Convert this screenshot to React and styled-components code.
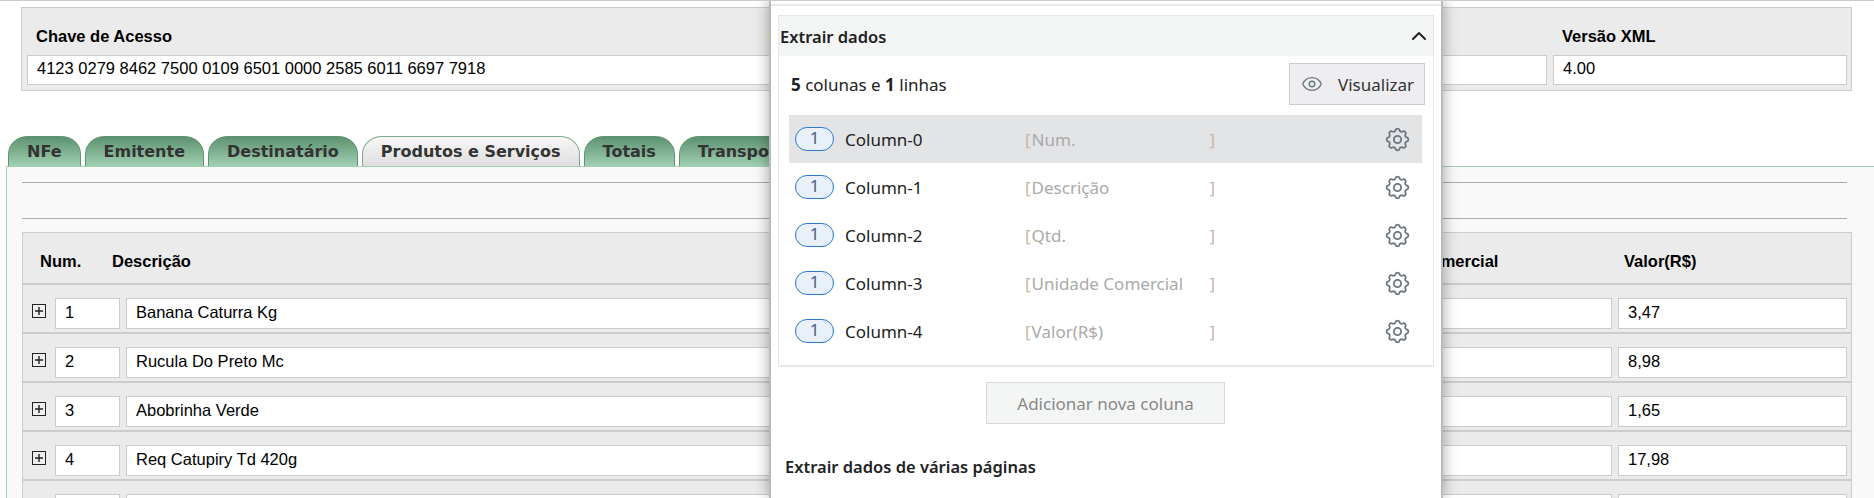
import React from 'react'
import styled, { createGlobalStyle } from 'styled-components'
import { ChevronUp, Eye } from 'lucide-react'
import { HiOutlineCog } from 'react-icons/hi'

const GlobalStyle = createGlobalStyle`
  html, body {
    margin: 0;
    padding: 0;
    background: #fff;
  }
  * {
    box-sizing: border-box;
  }
`
const Page = styled.div`
  position: relative;
  width: 1874px;
  height: 498px;
  overflow: hidden;
  border-top: 1px solid #ccc;
  font-family: "Liberation Sans", Arial, sans-serif;
  color: #000;
`
const KeyBox = styled.div`
  display: flex;
  gap: 6px;
  height: 84px;
  margin: 6px 22px 0 21px;
  padding: 0 4px 0 5px;
  background: #ebebeb;
  border: 1px solid #ccc;
`
const Field = styled.div`
  display: flex;
  flex-direction: column;
  flex: ${p => (p.$grow ? 1 : 'none')};
  width: ${p => (p.$grow ? 'auto' : '294px')};
`
const FieldLabel = styled.label`
  height: 47px;
  padding: 19px 0 0 9px;
  font-size: 16.5px;
  line-height: 19px;
  font-weight: bold;
`
const ValueBox = styled.div`
  height: 30px;
  padding-left: 9px;
  background: #fff;
  border: 1px solid #ccc;
  font-size: 16.5px;
  line-height: 25px;
  white-space: nowrap;
  overflow: hidden;
`
const Tabs = styled.div`
  display: flex;
  gap: 4px;
  height: 30px;
  margin: 45px 0 0 8px;
`
const Tab = styled.div`
  padding: 0 18px;
  border-radius: 20px 20px 0 0 / 18px 18px 0 0;
  border: 1px solid ${p => (p.$active ? '#7fa98c' : '#5f9470')};
  border-bottom: 0;
  background: ${p => (p.$active
    ? 'linear-gradient(#f7f7f7, #dedede)'
    : 'linear-gradient(#5d9270, #a0d0b2)')};
  color: #333;
  font-family: "DejaVu Sans", Verdana, sans-serif;
  font-size: 16px;
  line-height: 30px;
  font-weight: bold;
  white-space: nowrap;
`
const Panel = styled.div`
  height: 332px;
  margin-left: 6px;
  padding: 15px 22px 0 15px;
  background: #f9f9f9;
  border-top: 1px solid #a3d0b2;
  border-left: 1px solid #a3d0b2;
`
const Rule = styled.div`
  height: 1px;
  margin-bottom: ${p => p.$gap}px;
  margin-right: 5px;
  background: #aaa;
`
const Table = styled.div`
  background: #ebebeb;
  border: 1px solid #ccc;
  border-bottom: 0;
`
const GridRow = styled.div`
  display: grid;
  grid-template-columns: 26px 65px 1fr 170px 220px 229px;
  column-gap: 6px;
  align-items: start;
  padding-right: 4px;
`
const HeadRow = styled(GridRow)`
  height: 52px;
  padding-top: 19px;
  border-bottom: 2px solid #ccc;
`
const HeadCell = styled.div`
  margin-left: ${p => p.$shift || 0}px;
  font-size: 16.5px;
  line-height: 18px;
  font-weight: bold;
  white-space: nowrap;
`
const BodyRow = styled(GridRow)`
  height: 49px;
  padding-top: 13px;
  border-bottom: 2px solid #ccc;
`
const Expand = styled.svg`
  display: block;
  width: 14px;
  height: 14px;
  margin: 6px 0 0 9px;
`
const RowValue = styled(ValueBox)`
  height: 31px;
  line-height: 26px;
`
const Modal = styled.aside`
  position: absolute;
  top: -1px;
  left: 769px;
  width: 674px;
  height: 498px;
  padding: 4px 7px 0;
  background: #fff;
  border-left: 2px solid #bbb;
  border-right: 2px solid #bbb;
  box-shadow: 0 0 14px rgba(0, 0, 0, 0.35);
  font-family: "Noto Sans", "Open Sans", sans-serif;
  color: #222;
`
const TopLine = styled.div`
  height: 2px;
  margin: 0 -7px 9px;
  background: #ebebeb;
`
const Section = styled.section`
  width: 656px;
  height: 352px;
  background: #fff;
  border: 1px solid #e8e8e8;
  border-bottom-width: 2px;
`
const SectionHead = styled.div`
  display: flex;
  align-items: center;
  justify-content: space-between;
  height: 40px;
  padding: 0 2px 0 1px;
  background: #f4f6f5;
  font-size: 16.5px;
  font-weight: 600;
`
const SectionBody = styled.div`
  padding: 0 11px 0 10px;
`
const Summary = styled.div`
  display: flex;
  align-items: center;
  justify-content: space-between;
  height: 59px;
  padding: 0 0 2px 2px;
  font-size: 17px;
  b {
    font-weight: 700;
  }
`
const PreviewButton = styled.button`
  display: flex;
  align-items: center;
  gap: 15px;
  width: 136px;
  height: 42px;
  margin: -1px -3px 0 0;
  padding: 0 0 0 11px;
  background: #eeeef0;
  border: 1px solid #ccc;
  color: #333;
  font-family: inherit;
  font-size: 17px;
  svg {
    color: #6b7780;
  }
`
const ColumnRow = styled.div`
  display: flex;
  align-items: center;
  height: 48px;
  padding: 0 10px 0 6px;
  background: ${p => (p.$selected ? '#e3e4e6' : 'transparent')};
  font-size: 17px;
`
const Pill = styled.span`
  width: 39px;
  height: 24px;
  margin-right: 11px;
  background: #e8f0fa;
  border: 1.5px solid #2a7ad0;
  border-radius: 12px;
  color: #4f6280;
  font-size: 17px;
  line-height: 19px;
  text-align: center;
`
const ColumnName = styled.span`
  width: 180px;
`
const ColumnField = styled.span`
  display: flex;
  justify-content: space-between;
  width: 191px;
  margin-right: auto;
  color: #aaa;
  i {
    font-style: normal;
    color: #c9b6a6;
    margin-right: 1px;
  }
`
const Gear = styled(HiOutlineCog)`
  color: #6b7780;
  stroke-width: 1.5;
`
const AddButton = styled.button`
  display: block;
  width: 239px;
  height: 42px;
  margin: 15px 0 0 208px;
  background: #f4f6f5;
  border: 1px solid #d8d8d8;
  color: #888;
  font-family: inherit;
  font-size: 17px;
`
const SubTitle = styled.div`
  margin: 32px 0 0 7px;
  font-size: 16.5px;
  line-height: 22px;
  font-weight: 600;
`

const tabs = [
  { label: 'NFe' },
  { label: 'Emitente' },
  { label: 'Destinatário' },
  { label: 'Produtos e Serviços', active: true },
  { label: 'Totais' },
  { label: 'Transporte' },
]

const products = [
  { num: '1', desc: 'Banana Caturra Kg', value: '3,47' },
  { num: '2', desc: 'Rucula Do Preto Mc', value: '8,98' },
  { num: '3', desc: 'Abobrinha Verde', value: '1,65' },
  { num: '4', desc: 'Req Catupiry Td 420g', value: '17,98' },
  { num: '', desc: '', value: '' },
]

const columns = [
  { name: 'Column-0', field: 'Num.' },
  { name: 'Column-1', field: 'Descrição' },
  { name: 'Column-2', field: 'Qtd.' },
  { name: 'Column-3', field: 'Unidade Comercial' },
  { name: 'Column-4', field: 'Valor(R$)' },
]

const ExpandIco = () => (
  <Expand viewBox="0 0 14 14">
    <rect x="0.5" y="0.5" width="13" height="13" fill="#eee" stroke="#222" />
    <path d="M7 3v8M3 7h8" stroke="#222" strokeWidth="1.4" />
  </Expand>
)

const App = () => {
  return (
    <>
      <GlobalStyle />
      <Page>
        <KeyBox>
          <Field $grow>
            <FieldLabel>Chave de Acesso</FieldLabel>
            <ValueBox>4123 0279 8462 7500 0109 6501 0000 2585 6011 6697 7918</ValueBox>
          </Field>
          <Field>
            <FieldLabel>Versão XML</FieldLabel>
            <ValueBox>4.00</ValueBox>
          </Field>
        </KeyBox>

        <Tabs>
          {tabs.map(t => (
            <Tab key={t.label} $active={t.active}>{t.label}</Tab>
          ))}
        </Tabs>

        <Panel>
          <Rule $gap={35} />
          <Rule $gap={13} />
          <Table>
            <HeadRow>
              <span />
              <HeadCell $shift={-15}>Num.</HeadCell>
              <HeadCell $shift={-14}>Descrição</HeadCell>
              <HeadCell>Qtd.</HeadCell>
              <HeadCell $shift={-43}>Unidade Comercial</HeadCell>
              <HeadCell $shift={6}>Valor(R$)</HeadCell>
            </HeadRow>
            {products.map((p, i) => (
              <BodyRow key={i}>
                <ExpandIco />
                <RowValue>{p.num}</RowValue>
                <RowValue>{p.desc}</RowValue>
                <RowValue />
                <RowValue />
                <RowValue>{p.value}</RowValue>
              </BodyRow>
            ))}
          </Table>
        </Panel>

        <Modal>
          <TopLine />
          <Section>
            <SectionHead>
              Extrair dados
              <ChevronUp size={24} strokeWidth={2} />
            </SectionHead>
            <SectionBody>
              <Summary>
                <span><b>5</b> colunas e <b>1</b> linhas</span>
                <PreviewButton>
                  <Eye size={22} strokeWidth={1.5} />
                  Visualizar
                </PreviewButton>
              </Summary>
              {columns.map((c, i) => (
                <ColumnRow key={c.name} $selected={i === 0}>
                  <Pill>1</Pill>
                  <ColumnName>{c.name}</ColumnName>
                  <ColumnField>
                    <span><i>[</i>{c.field}</span>
                    <i>]</i>
                  </ColumnField>
                  <Gear size={29} />
                </ColumnRow>
              ))}
            </SectionBody>
          </Section>
          <AddButton>Adicionar nova coluna</AddButton>
          <SubTitle>Extrair dados de várias páginas</SubTitle>
        </Modal>
      </Page>
    </>
  )
}

export default App
